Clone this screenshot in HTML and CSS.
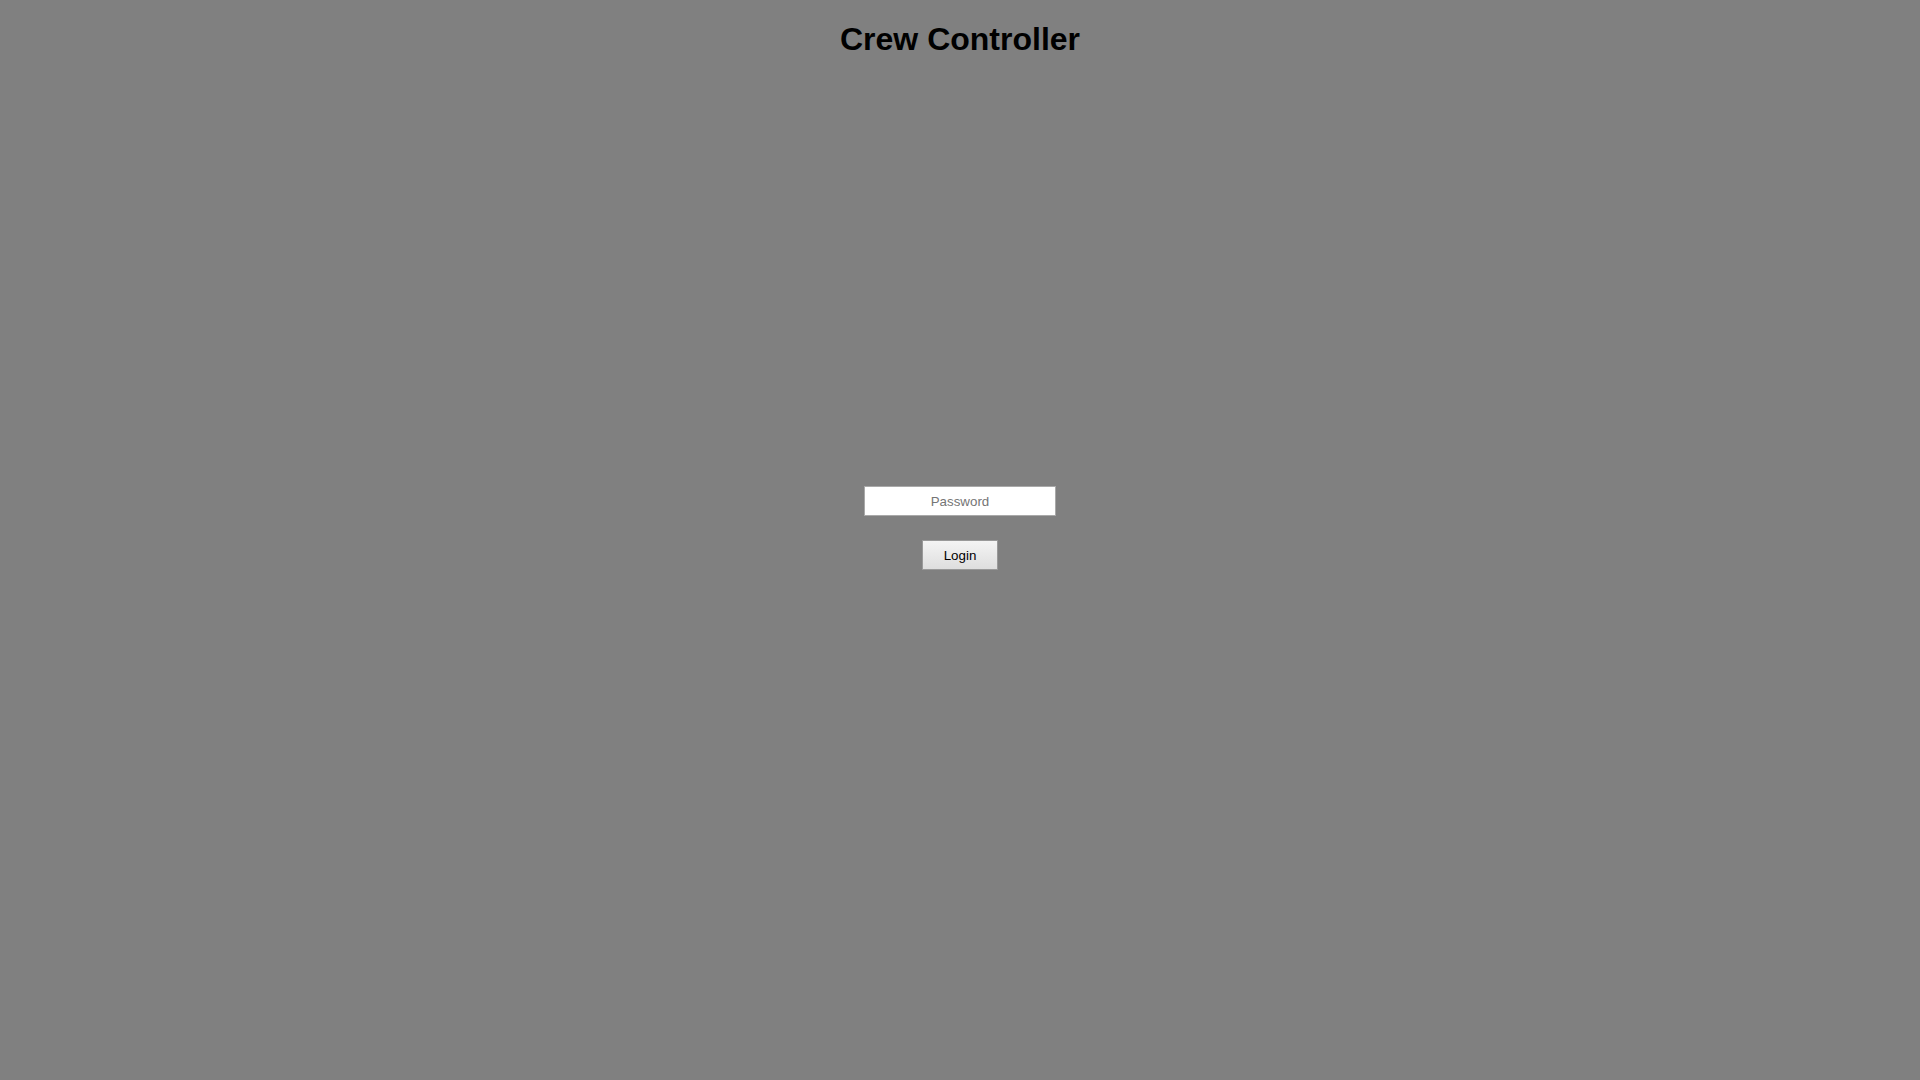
FILE: index.html
```html
<!DOCTYPE html>
<html lang="en">
<head>
<meta charset="utf-8">
<title>Crew Controller</title>
<link rel="stylesheet" href="styles.css">
</head>
<body class="page">
  <h1 class="title">Crew Controller</h1>
  <form class="login-form" onsubmit="return false;">
    <input class="password-input" type="password" placeholder="Password">
    <button class="login-button" type="submit">Login</button>
  </form>
</body>
</html>
```
FILE: styles.css
```css
html, body {
  margin: 0;
  padding: 0;
}
.page {
  background: #808080;
  min-height: 1080px;
  font-family: "Liberation Sans", Arial, sans-serif;
  display: flex;
  flex-direction: column;
  align-items: center;
}
.title {
  margin: 21px 0 0 0;
  font-size: 32px;
  font-weight: bold;
  line-height: 37px;
  color: #000;
}
.login-form {
  display: flex;
  flex-direction: column;
  align-items: center;
  margin-top: 428px;
  gap: 24px;
}
.password-input {
  box-sizing: border-box;
  width: 192px;
  height: 30px;
  margin: 0;
  padding: 0 4px;
  border: 1px solid #a9a9a9;
  background: #fff;
  font-family: "Liberation Sans", Arial, sans-serif;
  font-size: 13.33px;
  text-align: center;
  color: #000;
  outline: none;
}
.password-input::placeholder {
  color: #757575;
}
.login-button {
  box-sizing: border-box;
  width: 76px;
  height: 30px;
  margin: 0;
  padding: 0;
  border: 1px solid #999;
  background: linear-gradient(#f4f4f4, #dedede);
  font-family: "Liberation Sans", Arial, sans-serif;
  font-size: 13.33px;
  color: #000;
  cursor: pointer;
}
```
